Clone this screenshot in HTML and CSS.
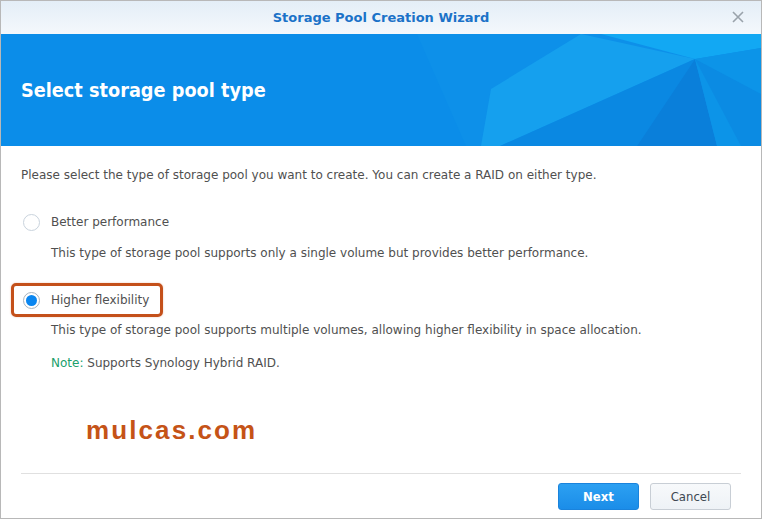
FILE: index.html
```html
<!DOCTYPE html>
<html>
<head>
<meta charset="utf-8">
<link rel="stylesheet" href="styles.css">
</head>
<body>
<div class="window">
  <div class="titlebar">
    <span class="title">Storage Pool Creation Wizard</span>
    <span class="close" aria-label="Close">
      <svg width="12" height="12" viewBox="0 0 12 12"><path d="M1 1 L11 11 M11 1 L1 11" stroke="#9aa3ab" stroke-width="1.6" fill="none"/></svg>
    </span>
  </div>
  <div class="banner">
    <svg class="banner-art" width="760" height="112" viewBox="0 0 760 112" preserveAspectRatio="none">
      <polygon points="416,0 760,0 760,112 465,112" fill="#0d90e9"/>
      <polygon points="580,0 694,25 499,112 480,112 490,55" fill="#15a0ee"/>
      <polygon points="600,0 760,0 760,14 694,25" fill="#12a8f3"/>
      <polygon points="694,25 499,112 636,112" fill="#0a88e2"/>
      <polygon points="694,25 636,112 716,112" fill="#0a7fda"/>
      <polygon points="694,25 760,14 760,112 716,112" fill="#0c94e8"/>
      <polygon points="694,25 760,60 760,112 740,112" fill="#0b8be3"/>
    </svg>
    <h1 class="banner-title">Select storage pool type</h1>
  </div>
  <div class="content">
    <p class="intro">Please select the type of storage pool you want to create. You can create a RAID on either type.</p>
    <label class="option">
      <span class="radio"></span>
      <span class="option-label">Better performance</span>
    </label>
    <p class="desc">This type of storage pool supports only a single volume but provides better performance.</p>
    <label class="option option-highlight">
      <span class="radio radio-checked"><span class="dot"></span></span>
      <span class="option-label">Higher flexibility</span>
    </label>
    <p class="desc desc-tight">This type of storage pool supports multiple volumes, allowing higher flexibility in space allocation.</p>
    <p class="note"><span class="note-key">Note:</span> Supports Synology Hybrid RAID.</p>
    <div class="watermark">mulcas.com</div>
  </div>
  <div class="footer">
    <button class="btn btn-primary">Next</button>
    <button class="btn btn-default">Cancel</button>
  </div>
</div>
</body>
</html>
```
FILE: styles.css
```css
* { box-sizing: border-box; }
html, body { margin: 0; padding: 0; background: #fff; }
body {
  font-family: "DejaVu Sans", sans-serif;
  font-size: 12px;
  color: #505050;
}
.window {
  width: 762px;
  height: 519px;
  border: 1px solid #b8b8b8;
  display: flex;
  flex-direction: column;
  background: #fff;
}
.titlebar {
  height: 33px;
  flex: none;
  display: flex;
  align-items: center;
  justify-content: center;
  position: relative;
  background: linear-gradient(#e4eef7, #f4f8fc);
}
.title {
  font-weight: bold;
  font-size: 13px;
  color: #1b72c8;
}
.close {
  position: absolute;
  right: 17px;
  top: 10px;
  width: 12px;
  height: 12px;
  display: flex;
}
.banner {
  height: 112px;
  flex: none;
  background: #0b8de9;
  position: relative;
  overflow: hidden;
  display: flex;
  align-items: center;
  padding-left: 20px;
}
.banner-art {
  position: absolute;
  left: 0;
  top: 0;
}
.banner-title {
  position: relative;
  margin: 0;
  font-family: "DejaVu Sans Condensed", "DejaVu Sans", sans-serif;
  font-size: 19.7px;
  font-weight: bold;
  color: #fff;
  padding-top: 1px;
}
.content {
  flex: 1;
  padding: 21px 20px 0 20px;
}
.intro, .desc, .note {
  margin: 0;
  line-height: 16px;
}
.option {
  display: flex;
  align-items: center;
  height: 34px;
  width: max-content;
  white-space: nowrap;
  margin: 22px 0 0 -10px;
  padding: 0 11px 0 9px;
  border: 3px solid transparent;
  border-radius: 5px;
}
.option-highlight {
  border-color: #c4501a;
  box-shadow: 0 0 2px rgba(196, 80, 26, 0.35);
}
.radio {
  width: 17px;
  height: 17px;
  border-radius: 50%;
  border: 1px solid #c9d3dd;
  background: #fff;
  flex: none;
  display: flex;
  align-items: center;
  justify-content: center;
}
.radio-checked { border-color: #a9b3bd; }
.dot {
  width: 11px;
  height: 11px;
  border-radius: 50%;
  background: #0a86f0;
}
.option-label {
  margin-left: 11px;
  color: #505050;
}
.desc {
  margin-top: 6px;
  padding-left: 30px;
}
.desc-tight { margin-top: 5px; }
.note {
  margin-top: 17px;
  padding-left: 30px;
}
.note-key { color: #20a06c; }
.watermark {
  margin: 45px 0 0 65px;
  font-family: "Liberation Sans", Arial, sans-serif;
  font-weight: bold;
  font-size: 26px;
  letter-spacing: 2.1px;
  color: #c55317;
  line-height: 28px;
}
.footer {
  flex: none;
  height: 45px;
  margin: 0 20px;
  border-top: 1px solid #e0e0e0;
  display: flex;
  justify-content: flex-end;
  align-items: flex-start;
  padding: 9px 10px 0 0;
  gap: 11px;
}
.btn {
  width: 81px;
  height: 27px;
  border-radius: 3px;
  font-family: "DejaVu Sans Condensed", "DejaVu Sans", sans-serif;
  font-size: 13px;
  padding: 0;
}
.btn-primary {
  background: linear-gradient(#2ca0f2, #1b8de8);
  border: 1px solid #1a83dc;
  color: #fff;
  font-weight: bold;
}
.btn-default {
  background: linear-gradient(#f7f9fb, #eef2f6);
  border: 1px solid #c8ced5;
  color: #3e4852;
}
```
